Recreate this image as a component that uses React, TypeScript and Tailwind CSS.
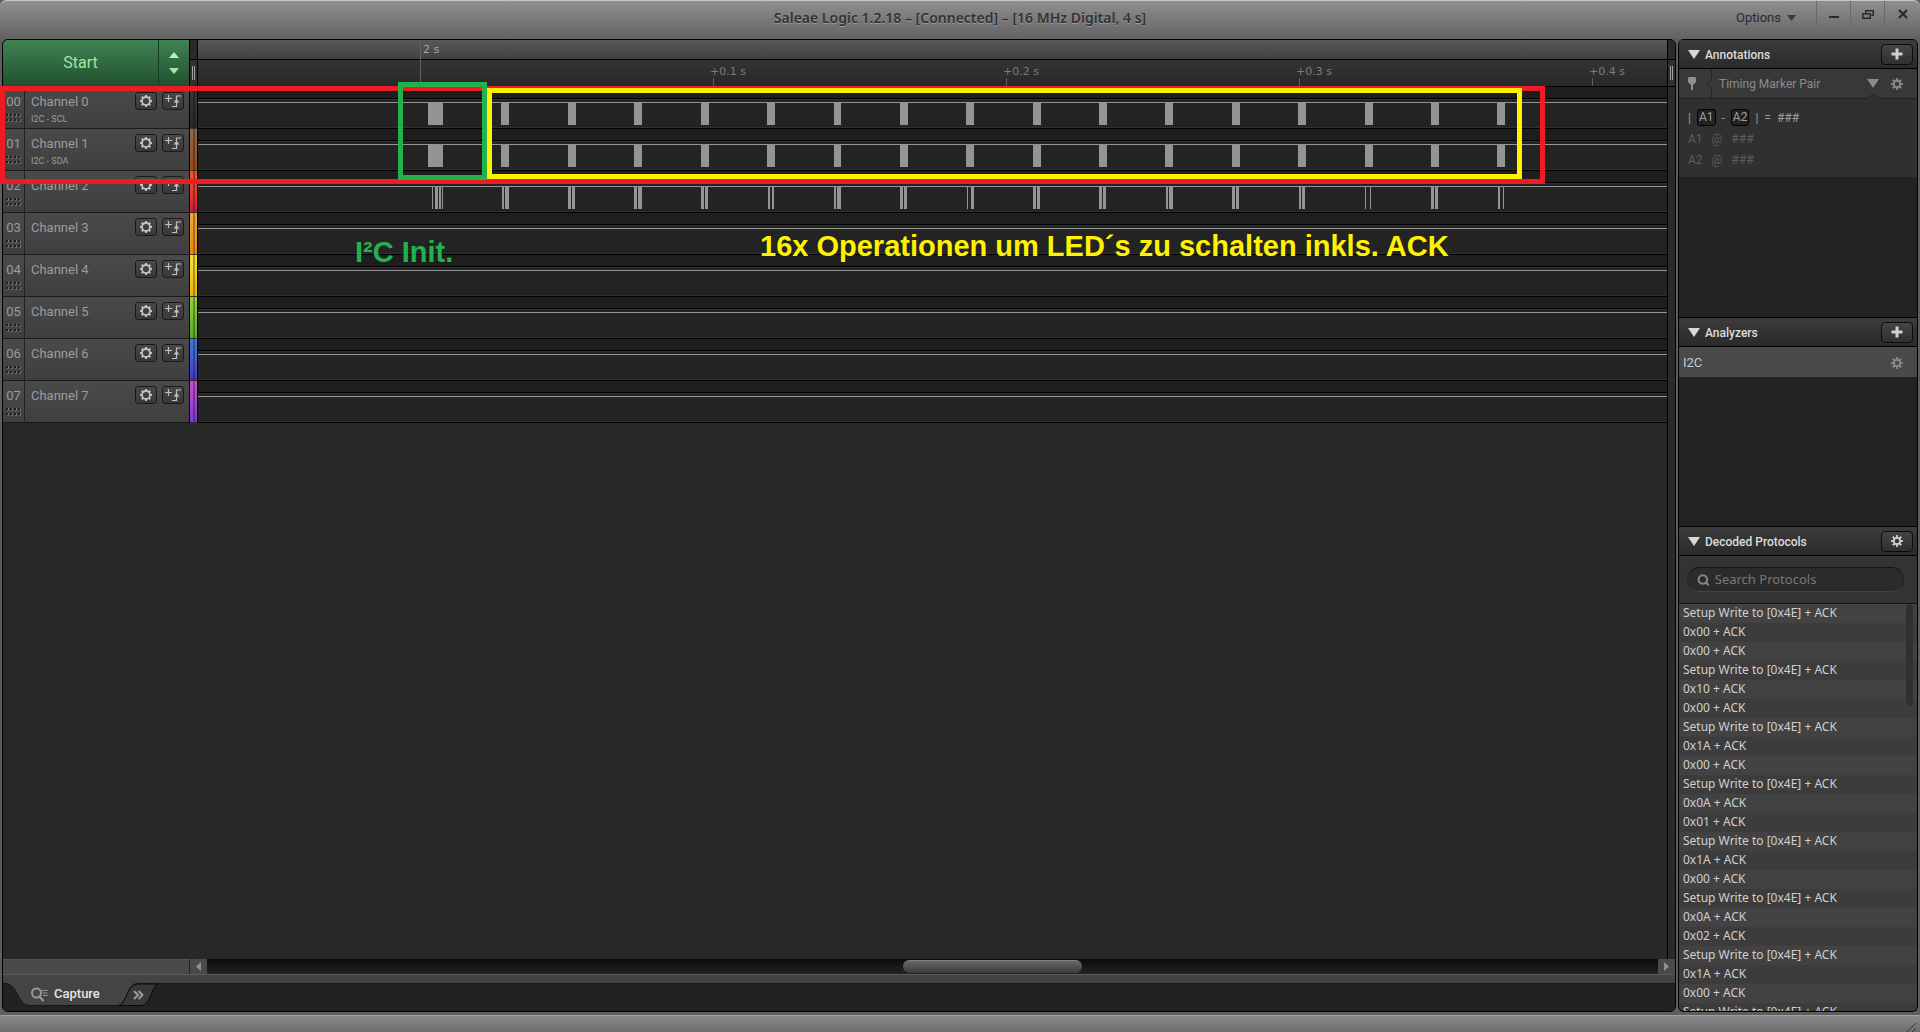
import { Search } from "lucide-react";

const channels = [
  { id: "00", name: "Channel 0", sub: "I2C - SCL", color: "from-[#3a3a3a] to-[#2a2a2a]" },
  { id: "01", name: "Channel 1", sub: "I2C - SDA", color: "from-[#8a6a50] to-[#9a4c10]" },
  { id: "02", name: "Channel 2", sub: "", color: "from-[#f4581c] to-[#d8143c]" },
  { id: "03", name: "Channel 3", sub: "", color: "from-[#f0a83c] to-[#f08a00]" },
  { id: "04", name: "Channel 4", sub: "", color: "from-[#f0e43c] to-[#f0b400]" },
  { id: "05", name: "Channel 5", sub: "", color: "from-[#94d43c] to-[#5cac2c]" },
  { id: "06", name: "Channel 6", sub: "", color: "from-[#3c80d8] to-[#4c34c4]" },
  { id: "07", name: "Channel 7", sub: "", color: "from-[#cc50c8] to-[#8034dc]" },
];

// [x, width] of each burst, measured from the start of the timeline
const busBursts = [
  [230, 15], [303, 8], [370, 8], [436, 8], [503, 8], [569, 8], [636, 7], [702, 8], [768, 8],
  [835, 8], [901, 8], [967, 8], [1034, 8], [1100, 8], [1167, 8], [1233, 8], [1299, 8],
];

const irqBursts = [
  [234, 1], [237, 3], [241, 2], [244, 1], [304, 2], [307, 4],
  [370, 3], [374, 3], [436, 3], [440, 4], [503, 3], [507, 3], [570, 2], [574, 2],
  [636, 2], [639, 4], [702, 3], [706, 3], [769, 1], [773, 3], [835, 3], [839, 3],
  [901, 3], [905, 3], [968, 2], [971, 4], [1034, 3], [1038, 3], [1101, 2], [1104, 3],
  [1167, 1], [1172, 1], [1233, 3], [1237, 3], [1300, 2], [1305, 1],
];

const ticks = [
  { x: 515, label: "+0.1 s" },
  { x: 808, label: "+0.2 s" },
  { x: 1101, label: "+0.3 s" },
  { x: 1394, label: "+0.4 s" },
];

const setup = "Setup Write to [0x4E] + ACK";

const decoded = [
  setup, "0x00 + ACK", "0x00 + ACK",
  setup, "0x10 + ACK", "0x00 + ACK",
  setup, "0x1A + ACK", "0x00 + ACK",
  setup, "0x0A + ACK", "0x01 + ACK",
  setup, "0x1A + ACK", "0x00 + ACK",
  setup, "0x0A + ACK", "0x02 + ACK",
  setup, "0x1A + ACK", "0x00 + ACK",
  setup,
];

const teeth = [0, 45, 90, 135, 180, 225, 270, 315];

const Gear = ({ className = "" }) => (
  <svg width="12" height="12" viewBox="0 0 12 12" className={className} aria-hidden="true">
    <circle cx="6" cy="6" r="3.2" fill="none" stroke="currentColor" strokeWidth="1.8" />
    {teeth.map((a) => (
      <rect key={a} x="5.1" y="0" width="1.8" height="2.2" fill="currentColor" transform={`rotate(${a} 6 6)`} />
    ))}
  </svg>
);

const RingGear = () => (
  <svg width="12" height="12" viewBox="0 0 12 12" aria-hidden="true">
    <circle cx="6" cy="6" r="4" fill="none" stroke="currentColor" strokeWidth="1.8" />
    {teeth.map((a) => (
      <rect key={a} x="5" y="0" width="2" height="2" fill="currentColor" transform={`rotate(${a} 6 6)`} />
    ))}
  </svg>
);

const TriggerIcon = () => (
  <svg width="16" height="12" viewBox="0 0 16 12" fill="none" stroke="currentColor" aria-hidden="true">
    <path d="M0 3.5h7M3.5 0v7M7 11.5h4.5v-10.5h4.5" strokeWidth="1.2" />
    <path d="M8.5 7.5l3-3.5 3 3.5z" fill="currentColor" stroke="none" />
  </svg>
);

const Grip = () => (
  <svg width="16" height="8" viewBox="0 0 16 8" aria-hidden="true">
    {[0, 4, 8, 12].map((x) =>
      [0, 5].map((y) => (
        <g key={`${x}-${y}`}>
          <rect x={x} y={y} width="3" height="2" fill="#1f1f1f" />
          <rect x={x + 2} y={y} width="1" height="2" fill="#6c6c6c" />
          <rect x={x + 1} y={y + 2} width="2" height="1" fill="#6c6c6c" />
        </g>
      ))
    )}
  </svg>
);

const Plus = () => (
  <svg width="12" height="12" viewBox="0 0 12 12" className="text-[#d0d0d0]" aria-hidden="true">
    <path d="M4.5 0.5h3v4h4v3h-4v4h-3v-4h-4v-3h4z" fill="currentColor" />
  </svg>
);

const Down = ({ className = "" }) => (
  <svg width="12" height="9" viewBox="0 0 12 9" className={className} aria-hidden="true">
    <path d="M0 0h12L6 9z" fill="currentColor" />
  </svg>
);

const SplitHandle = () => (
  <div className="flex w-[7px] shrink-0 flex-col bg-[#2a2a2a]">
    <div className="h-5 border-b border-black" />
    <div className="flex h-[27px] items-center justify-center gap-px border-b border-black bg-[#303030]">
      <span className="h-3.5 w-px bg-[#a0a0a0]" />
      <span className="h-3.5 w-px bg-[#a0a0a0]" />
    </div>
  </div>
);

const TitleBar = () => (
  <header className="flex h-[39px] shrink-0 rounded-t-md border-t border-[#c4c6c4] bg-linear-to-b from-[#909090] to-[#626262] text-[#2a2a2a]">
    <div className="grid flex-1 grid-cols-[1fr_auto_1fr]">
      <span />
      <h1 className="pt-[5px] font-['Noto_Sans',sans-serif] text-[14px] leading-6 font-semibold text-[#333] [text-shadow:0_1px_0_#9a9a9a]">
        Saleae Logic 1.2.18 – [Connected] – [16 MHz Digital, 4 s]
      </h1>
      <span />
    </div>
    <div className="-ml-[184px] flex w-[184px] items-start">
      <button className="flex items-center gap-1.5 pt-[5px] text-[13px] leading-6">
        Options
        <svg width="9" height="6" viewBox="0 0 9 6" aria-hidden="true">
          <path d="M0 0h9L4.5 6z" fill="#3a3a3a" />
        </svg>
      </button>
      <div className="ml-auto flex h-[26px]">
        <button aria-label="Minimize" className="flex w-[34px] items-center justify-center border-l border-[#6a6a6a]">
          <span className="mt-1.5 h-0.5 w-2.5 bg-[#2a2a2a]" />
        </button>
        <button aria-label="Restore" className="flex w-[34px] items-center justify-center border-l border-[#6a6a6a]">
          <svg width="12" height="9" viewBox="0 0 12 9" fill="none" stroke="#2a2a2a" strokeWidth="1.5" aria-hidden="true">
            <path d="M3.75 3.5v-2.75h7.5v4.5h-2M0.75 3.75h7.5v4.5h-7.5z" />
          </svg>
        </button>
        <button aria-label="Close" className="flex w-9 items-center justify-center border-l border-[#6a6a6a]">
          <svg width="10" height="10" viewBox="0 0 10 10" stroke="#2a2a2a" strokeWidth="2.2" aria-hidden="true">
            <path d="M1 1l8 8M9 1l-8 8" />
          </svg>
        </button>
      </div>
    </div>
  </header>
);

const iconButton =
  "flex h-[18px] w-[22px] items-center justify-center rounded-[3px] border border-[#1a1a1a] bg-linear-to-b from-[#484848] to-[#383838] text-[#c0c0c0]";

const ChannelRow = ({ channel }) => (
  <div className="flex h-[42px] border-b border-[#1a1a1a] bg-linear-to-b from-[#4a4a4a] to-[#3f3f3f] text-[#9c9c9c]">
    <div className="flex w-[22px] flex-col items-center gap-1 border-r border-[#222] pt-[7px]">
      <span className="text-[13px] leading-4">{channel.id}</span>
      <Grip />
    </div>
    <div className="flex-1 pt-[7px] pl-1.5">
      <p className="text-[13px] leading-4">{channel.name}</p>
      <p className="text-[9px] leading-[18px]">{channel.sub}</p>
    </div>
    <div className="flex gap-[5px] pt-[5px] pr-[5px]">
      <button aria-label={`${channel.name} settings`} className={iconButton}>
        <RingGear />
      </button>
      <button aria-label={`${channel.name} trigger`} className={iconButton}>
        <TriggerIcon />
      </button>
    </div>
  </div>
);

const Track = ({ bursts }) => (
  <div className="h-[42px] border-b border-black">
    <div className="h-3 border-b border-black bg-[#1e1e1e]" />
    <div className="h-[29px] border-b border-[#303030] bg-[#232323]">
      <svg width="100%" height="28" aria-hidden="true">
        <rect x="0" y="0" width="100%" height="1" fill="#303030" />
        <rect x="0" y="3" width="100%" height="1" fill="#949494" />
        {bursts.map(([x, w]) => (
          <rect key={x} x={x} y="4" width={w} height="22" fill="#949494" />
        ))}
      </svg>
    </div>
  </div>
);

const Ruler = () => (
  <div className="relative h-[47px] border-b border-black font-['DejaVu_Sans','Noto_Sans',sans-serif] text-[11px] text-[#7c7c7c]">
    <div className="h-5 border-b border-black bg-linear-to-b from-[#585858] to-[#424242]" />
    <div className="h-[26px] bg-linear-to-b from-[#343434] to-[#282828]" />
    <span className="absolute top-0 left-[222px] h-[46px] border-l border-[#606060] pl-0.5 leading-5 text-[#a8a8a8]">
      2 s
    </span>
    {ticks.map((tick) => (
      <div key={tick.label} className="absolute bottom-0" style={{ left: tick.x }}>
        <p className="-ml-[3px] leading-3">{tick.label}</p>
        <div className="h-2 border-l border-[#606060]" />
      </div>
    ))}
  </div>
);

const Scrollbar = () => (
  <div className="flex h-[15px] shrink-0 bg-[#4a4a4a]">
    <div className="w-[187px] border-t border-r border-t-[#555] border-r-[#222]" />
    <button aria-label="Scroll left" className="flex w-[17px] items-center justify-center">
      <svg width="5" height="9" viewBox="0 0 5 9" aria-hidden="true">
        <path d="M5 0v9L0 4.5z" fill="#909090" />
      </svg>
    </button>
    <div className="flex flex-1 bg-linear-to-b from-[#0c0c0c] to-[#242424] py-px">
      <div className="w-[48%]" />
      <div className="w-[179px] rounded-full border-t border-[#808080] bg-linear-to-b from-[#666] to-[#3c3c3c]" />
    </div>
    <button aria-label="Scroll right" className="flex w-[17px] items-center justify-center">
      <svg width="5" height="9" viewBox="0 0 5 9" aria-hidden="true">
        <path d="M0 0v9L5 4.5z" fill="#909090" />
      </svg>
    </button>
  </div>
);

const CaptureTabs = () => (
  <div className="h-[37px] shrink-0">
    <div className="h-2.5 border-t border-b border-t-[#5c5c5c] border-b-[#181818] bg-[#444]" />
    <div className="relative h-[27px] bg-[#222]">
      <svg width="160" height="23" viewBox="0 0 160 23" className="absolute -top-px left-0" aria-hidden="true">
        <path d="M116 22.5C124 20 124 1 134 1h21C148 4 148 22.5 138 22.5z" fill="#383838" stroke="#0a0a0a" />
        <path d="M0 0h134C122 2 124 22 114 22H26C14 22 16 2 2 0z" fill="#444" />
        <path d="M0 0.5h2C16 1 14 22.5 26 22.5h90" fill="none" stroke="#181818" />
      </svg>
      <button className="absolute top-0 left-7 flex h-5 items-center gap-1.5 text-[13px] font-medium text-[#e4e4e4]">
        <svg width="17" height="15" viewBox="0 0 17 15" fill="none" stroke="#9a9a9a" aria-hidden="true">
          <circle cx="5.5" cy="6" r="4.5" strokeWidth="2" />
          <path d="M8.5 9.5l4 4.5" strokeWidth="2.2" />
          <path d="M11 3.5h5.5M12 6h4.5M12 8.5h4.5" />
        </svg>
        Capture
      </button>
      <button aria-label="More tabs" className="absolute top-1.5 left-[130px]">
        <svg width="11" height="10" viewBox="0 0 11 10" fill="none" stroke="#9a9a9a" strokeWidth="2" aria-hidden="true">
          <path d="M1 1l4 4-4 4M5.5 1l4 4-4 4" />
        </svg>
      </button>
    </div>
  </div>
);

const PanelHeader = ({ title, children }) => (
  <div className="flex h-[30px] shrink-0 items-center border-y border-black bg-linear-to-b from-[#3c3c3c] to-[#2a2a2a] pr-1 pl-[9px]">
    <Down className="text-[#d8d8d8]" />
    <h2 className="flex-1 pt-px pl-[5px] text-[12px] font-medium text-[#dcdcdc]">{title}</h2>
    <button
      aria-label={`${title} options`}
      className="flex h-[21px] w-8 items-center justify-center rounded border border-[#0c0c0c] bg-linear-to-b from-[#444] to-[#303030] text-[#d0d0d0]"
    >
      {children}
    </button>
  </div>
);

const Sidebar = () => (
  <aside className="flex w-[240px] shrink-0 flex-col overflow-hidden rounded-md border-x border-b border-black bg-[#232323]">
    <section className="flex h-[278px] shrink-0 flex-col">
      <PanelHeader title="Annotations">
        <Plus />
      </PanelHeader>
      <div className="relative flex h-[30px] items-center border-b border-[#222] bg-[#383838] pr-3.5 pl-[9px] text-[#8c8c8c]">
        <svg width="8" height="13" viewBox="0 0 8 13" aria-hidden="true">
          <path d="M1 0h6l1 1v4L5 8v5H3V8L0 5V1z" fill="#909090" />
        </svg>
        <svg width="6" height="29" viewBox="0 0 6 29" fill="none" stroke="#242424" className="ml-2.5" aria-hidden="true">
          <path d="M5.5 0v10.5l-4 4 4 4V29" />
        </svg>
        <span className="flex-1 pl-[7px] text-[12px]">Timing Marker Pair</span>
        <Down className="mr-3" />
        <Gear />
        <svg width="14" height="5" viewBox="0 0 14 5" className="absolute right-[37px] -bottom-px" aria-hidden="true">
          <path d="M0 5L7 1l7 4z" fill="#303030" />
          <path d="M0 4.5L7 0.5l7 4" fill="none" stroke="#222" />
        </svg>
      </div>
      <div className="h-[78px] bg-[#303030] px-[9px] pt-2 text-[12px] text-[#5c5c5c]">
        <p className="flex h-[21px] items-center gap-1.5 text-[#9c9c9c]">
          <span>|</span>
          <span className="rounded-[3px] border border-black bg-[#222] px-px leading-[15px]">A1</span>
          <span>-</span>
          <span className="rounded-[3px] border border-black bg-[#222] px-px leading-[15px]">A2</span>
          <span>|</span>
          <span>=</span>
          <span>###</span>
        </p>
        <p className="flex h-[21px] items-center gap-[9px]"><span>A1</span><span>@</span><span>###</span></p>
        <p className="flex h-[21px] items-center gap-[9px]"><span>A2</span><span>@</span><span>###</span></p>
      </div>
    </section>

    <section className="h-[209px] shrink-0">
      <PanelHeader title="Analyzers">
        <Plus />
      </PanelHeader>
      <div className="flex h-[30px] items-center justify-between bg-[#494949] pt-px pr-3.5 pl-1 text-[13px] text-[#c8c8c8]">
        I2C
        <Gear className="text-[#8c8c8c]" />
      </div>
    </section>

    <section className="flex min-h-0 flex-1 flex-col">
      <PanelHeader title="Decoded Protocols">
        <Gear />
      </PanelHeader>
      <div className="h-12 shrink-0 border-b border-[#141414] bg-[#333] px-2 pt-[11px]">
        <label className="flex h-[25px] w-[217px] items-center gap-[5px] rounded-full border border-x-[#252525] border-t-[#151515] border-b-[#444] bg-[#2b2b2b] pr-2 pl-[9px]">
          <Search size={14} strokeWidth={4} className="text-[#858585]" />
          <input
            aria-label="Search Protocols"
            placeholder="Search Protocols"
            className="w-full bg-transparent font-['Noto_Sans',sans-serif] text-[13px] outline-none placeholder:text-[#777]"
          />
        </label>
      </div>
      <div className="relative min-h-0 flex-1 overflow-hidden">
        <ul className="font-['Noto_Sans',sans-serif] text-[12px] text-[#d0d0d0]">
          {decoded.map((line, i) => (
            <li key={i} className="h-[19px] pl-1 leading-[18px] odd:bg-[#424242] even:bg-[#3c3c3c]">
              {line}
            </li>
          ))}
        </ul>
        <div className="absolute top-0 right-1 h-[102px] w-[7px] rounded-full bg-[#303030]" />
      </div>
    </section>
  </aside>
);

// Hand-drawn notes laid over the capture
const Notes = () => (
  <div className="pointer-events-none absolute inset-0 font-['Liberation_Sans',sans-serif] font-bold whitespace-nowrap">
    <div className="absolute top-[86px] left-0 h-[98px] w-[1545px] border-[5px] border-[#ed1c24]" />
    <div className="absolute top-[88px] left-[487px] h-[91px] w-[1035px] border-[5px] border-[#fff200]" />
    <div className="absolute top-[82px] left-[398px] h-[98px] w-[89px] border-[5px] border-[#22b14c]" />
    <p className="absolute top-[234px] left-[355px] text-[29px] leading-9 text-[#22b14c]">I²C Init.</p>
    <p className="absolute top-[228px] left-[760px] text-[29px] leading-9 text-[#fff200]">
      16x Operationen um LED´s zu schalten inkls. ACK
    </p>
  </div>
);

const App = () => {
  return (
    <div className="relative flex h-screen flex-col overflow-hidden bg-[#5e5e5e] font-[Roboto,sans-serif]">
      <TitleBar />

      <div className="flex min-h-0 flex-1 gap-0.5 px-0.5">
        <main className="flex min-w-0 flex-1 flex-col overflow-hidden rounded-md border border-black bg-[#282828]">
          <div className="flex min-h-0 flex-1">
            <div className="flex min-w-0 flex-1 items-start">
              <div className="w-[187px] shrink-0 border-r border-black">
                <div className="flex h-[47px] border-b border-black bg-linear-to-b from-[#3f8453] to-[#21502f] text-[#a8e4a0]">
                  <button className="flex-1 border-r border-[#163c22] text-base">Start</button>
                  <button aria-label="Capture settings" className="flex w-[30px] flex-col items-center justify-center gap-2.5">
                    <svg width="10" height="6" viewBox="0 0 10 6" aria-hidden="true">
                      <path d="M0 6h10L5 0z" fill="#c0f0b8" />
                    </svg>
                    <svg width="10" height="6" viewBox="0 0 10 6" aria-hidden="true">
                      <path d="M0 0h10L5 6z" fill="#a8e4a0" />
                    </svg>
                  </button>
                </div>
                {channels.map((channel) => (
                  <ChannelRow key={channel.id} channel={channel} />
                ))}
              </div>
              <div className="w-2 shrink-0 border-r border-black">
                <SplitHandle />
                {channels.map((channel) => (
                  <div
                    key={channel.id}
                    className={`flex h-[42px] justify-center border-b border-[#333] bg-linear-to-b ${channel.color}`}
                  >
                    <span className="w-0.5 bg-black/30" />
                  </div>
                ))}
              </div>
              <div className="min-w-0 flex-1 overflow-hidden">
                <Ruler />
                {channels.map((channel, i) => (
                  <Track key={channel.id} bursts={i < 2 ? busBursts : i === 2 ? irqBursts : []} />
                ))}
              </div>
            </div>
            <div className="flex border-l border-black bg-[#2a2a2a]">
              <SplitHandle />
            </div>
          </div>
          <Scrollbar />
          <CaptureTabs />
        </main>
        <Sidebar />
      </div>

      <footer className="mt-[3px] flex h-[17px] shrink-0 items-end justify-end border-t border-[#a0a0a0] bg-linear-to-b from-[#8a8a8c] to-[#6c6c6c] pr-1">
        <svg width="9" height="9" viewBox="0 0 9 9" stroke="#333" aria-hidden="true">
          <path d="M0 9l9-9M5 9l4-4" />
        </svg>
      </footer>

      <Notes />
    </div>
  );
};

export default App;
